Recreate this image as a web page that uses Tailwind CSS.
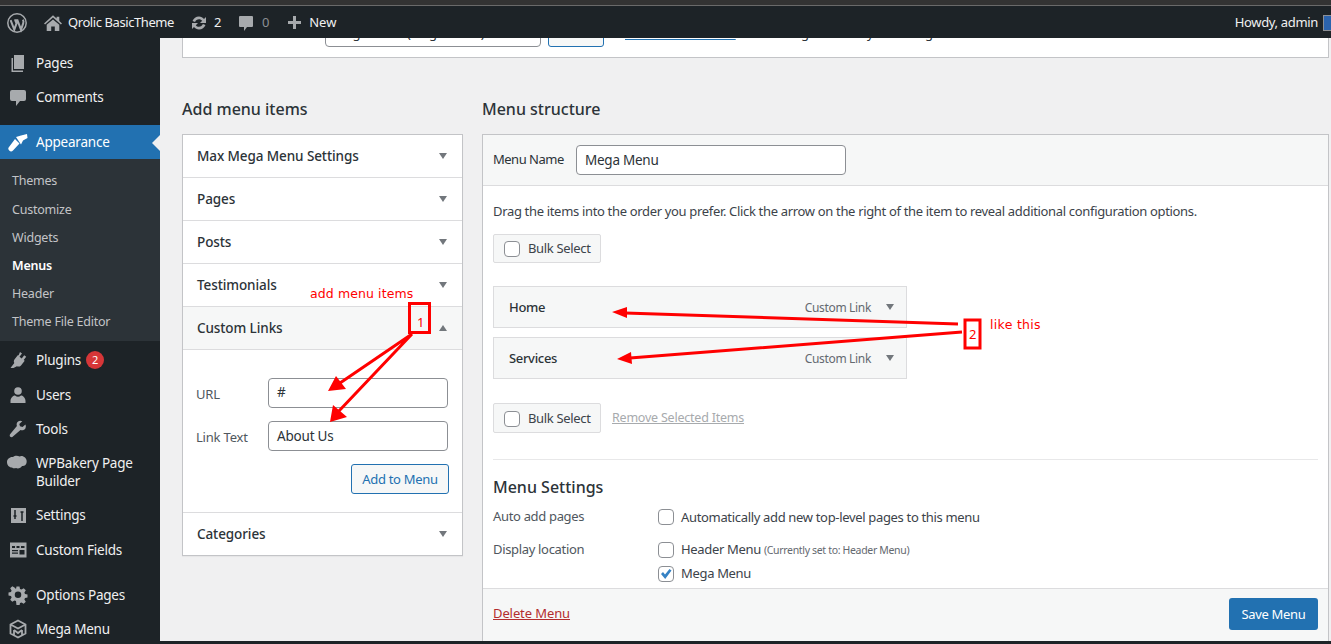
<!DOCTYPE html>
<html>
<head>
<meta charset="utf-8">
<script src="https://cdn.jsdelivr.net/npm/@tailwindcss/browser@4"></script>
</head>
<body class="bg-[#1d2327]">
<div class="relative w-[1331px] h-[644px] overflow-hidden flex flex-col font-['Noto_Sans',sans-serif] text-[13px] tracking-[-0.33px] text-[#2c3338]">
  <div class="h-[5px] bg-[#333333] shrink-0"></div>
  <div class="h-px bg-[#6a6a6a] shrink-0"></div>
  <!-- Admin bar -->
  <header class="relative z-10 h-[32px] shrink-0 bg-[#1d2327] flex items-center text-[#f0f0f1] text-[13px] pt-[1px]">
    <svg class="ml-[7px] w-[20px] h-[20px] fill-none stroke-[#a7aaad]" viewBox="0 0 20 20"><circle cx="10" cy="10" r="9.200" stroke-width="1.500"/><path d="M3.600 7.200l3.700 9.500 2.200-6.300-1.200-3.200M7.300 7.200h3.900M10.400 7.200l3.600 9.500 2.200-6.400c.6-1.700.1-3-.5-3.600" stroke-width="2"/></svg>
    <svg class="ml-[17px] w-[18px] h-[18px] fill-[#a7aaad]" viewBox="0 0 20 20"><path d="M10 1.500L0 10.500l1.200 1.300L10 4l8.800 7.800 1.200-1.300-3-2.700V3h-3v2.100z"/><path d="M3 12l7-6 7 6v7h-5v-5H8v5H3z"/></svg>
    <span class="ml-[6px] w-[107px] whitespace-nowrap tracking-[-0.42px]">Qrolic BasicTheme</span>
    <svg class="ml-[14px] w-[20px] h-[20px] fill-[#a7aaad]" viewBox="0 0 20 20"><path d="M10 3.500c2 0 3.800.9 5 2.400L17 4v6h-6l2.200-2.200C12.400 6.800 11.300 6.200 10 6.200c-1.800 0-3.300 1.100-3.900 2.700L3.500 8C4.500 5.400 7 3.500 10 3.500zM3 10h6l-2.200 2.200c.8 1 1.900 1.600 3.200 1.600 1.800 0 3.300-1.100 3.900-2.700l2.600.9c-1 2.600-3.500 4.500-6.500 4.500-2 0-3.800-.9-5-2.400L3 16z"/></svg>
    <span class="ml-[5px]">2</span>
    <svg class="ml-[17px] w-[16px] h-[18px] fill-[#a7aaad]" viewBox="0 0 16 18"><path d="M2 2h12a1 1 0 011 1v9a1 1 0 01-1 1H9l-3 4v-4H2a1 1 0 01-1-1V3a1 1 0 011-1z"/></svg>
    <span class="ml-[8px] text-[#8c8f94]">0</span>
    <svg class="ml-[18px] w-[15px] h-[15px] fill-[#a7aaad]" viewBox="0 0 15 15"><path d="M6 1h3v5h5v3H9v5H6V9H1V6h5z"/></svg>
    <span class="ml-[7px] tracking-[0px]">New</span>
    <span class="ml-auto mr-[5px] tracking-[-0.33px]">Howdy, admin</span>
    <span class="w-[8px] h-[16px] bg-[#2b63ad] border border-[#8c8f94] border-r-0"></span>
  </header>

  <div class="flex flex-1 min-h-0">
    <!-- Sidebar -->
    <aside class="w-[160px] shrink-0 bg-[#1d2327] text-[#f0f0f1] text-[13.5px] tracking-[-0.22px] flex flex-col overflow-hidden">
      <div class="h-[87px] pt-[8px] shrink-0">
        <div class="flex items-center h-[34px] pl-[8px] gap-[8px]">
          <svg class="w-[20px] h-[20px] fill-[#a7aaad]" viewBox="0 0 20 20"><path d="M6 2h10v14H6z"/><path d="M3.500 5H5v12.500h10V19H3.500z"/></svg><span>Pages</span>
        </div>
        <div class="flex items-center h-[34px] pl-[8px] gap-[8px]">
          <svg class="w-[20px] h-[20px] fill-[#a7aaad]" viewBox="0 0 20 20"><path d="M4 3h12a2 2 0 012 2v7a2 2 0 01-2 2h-4l-4 5v-5H4a2 2 0 01-2-2V5a2 2 0 012-2z"/></svg><span>Comments</span>
        </div>
      </div>
      <div class="relative flex items-center h-[34px] shrink-0 pl-[8px] gap-[8px] bg-[#2271b1] text-white">
        <svg class="w-[20px] h-[20px] fill-white" viewBox="0 0 20 20"><path d="M8 5l5-1.500L19 2l.5 4-4.500 2.500-2 4z"/><path d="M7 7l4.500 4.500L5 18.500a2.400 2.400 0 01-3.800-3.800z"/></svg>
        <span>Appearance</span>
        <span class="absolute right-0 top-[10px] w-0 h-0 border-y-[8px] border-y-transparent border-r-[8px] border-r-[#f0f0f1]"></span>
      </div>
      <div class="bg-[#2c3338] h-[182px] shrink-0 pt-[7px] text-[12.500px] text-[#c3c4c7]">
        <div class="h-[29px] pl-[12px] flex items-center pt-[2px]">Themes</div>
        <div class="h-[28px] pl-[12px] flex items-center pt-[2px]">Customize</div>
        <div class="h-[28px] pl-[12px] flex items-center pt-[2px]">Widgets</div>
        <div class="h-[28px] pl-[12px] flex items-center pt-[2px] font-semibold text-white">Menus</div>
        <div class="h-[28px] pl-[12px] flex items-center pt-[2px]">Header</div>
        <div class="h-[28px] pl-[12px] flex items-center pt-[2px]">Theme File Editor</div>
      </div>
      <div class="flex items-center h-[36px] mt-px shrink-0 pl-[8px] gap-[8px]">
        <svg class="w-[20px] h-[20px] fill-[#a7aaad]" viewBox="0 0 20 20"><path d="M12 2l2 1.500-2.500 3.300 2.200 1.700 2.500-3.300 2 1.500-2.500 3.300 1 .8-3.700 4.600c-1.100 1.300-2.800 1.500-4.100.8L5.500 18H2.500l3.800-5c-.7-1.200-.6-2.700.3-3.800L10 5l.5.400z"/></svg>
        <span>Plugins</span>
        <span class="-ml-[3px] w-[18px] h-[18px] rounded-full bg-[#d63638] text-white text-[11px] flex items-center justify-center">2</span>
      </div>
      <div class="flex items-center h-[34px] shrink-0 pl-[8px] gap-[8px]">
        <svg class="w-[20px] h-[20px] fill-[#a7aaad]" viewBox="0 0 20 20"><circle cx="10" cy="6" r="3.800"/><path d="M2.500 16c0-3.500 3-5.500 4.500-5.500 1 .8 2 1.200 3 1.200s2-.4 3-1.200c1.500 0 4.500 2 4.500 5.500v2h-15z"/></svg><span>Users</span>
      </div>
      <div class="flex items-center h-[34px] shrink-0 pl-[8px] gap-[8px]">
        <svg class="w-[20px] h-[20px] fill-[#a7aaad]" viewBox="0 0 20 20"><path d="M17.500 5.500l-3 2.500-2.500-.7-.7-2.300 3-2.800C12 1 9.500 2 8.800 4.200c-.3 1-.2 1.900.1 2.800l-6.400 7.700c-1 1.100-1 2.300-.2 3s2 .6 2.900-.4L12.500 11c2 .6 4 0 5-1.800.5-1.200.5-2.500 0-3.700z"/></svg><span>Tools</span>
      </div>
      <div class="flex h-[52px] shrink-0 pl-[8px] gap-[8px] pt-[8px] leading-[18px]">
        <svg class="w-[20px] h-[18px] -ml-[1px] mr-[1px] fill-[#a7aaad] shrink-0" viewBox="0 0 20 18"><path d="M0 8c0-3 3-5.500 6-5 2-2 5-1.500 6.500-.5 1.500-1 4-.5 5.500 1 1.500 1.500 2 3.500 1.500 5.500-.5 2-2.500 3.500-4.500 3-1 2-4 3-6 2-1 .5-3 .5-4-.5C2 13.500 0 11 0 8z"/></svg>
        <span class="w-[110px]">WPBakery Page Builder</span>
      </div>
      <div class="flex items-center h-[34px] shrink-0 pl-[8px] gap-[8px]">
        <svg class="w-[20px] h-[20px]" viewBox="0 0 20 20"><path fill="#a7aaad" d="M3 3h15v15H3z"/><path stroke="#1d2327" stroke-width="1.500" d="M7 5v9M14 7v9M5.500 11h3M12.500 7h3"/></svg><span>Settings</span>
      </div>
      <div class="flex items-center h-[34px] mt-px shrink-0 pl-[8px] gap-[8px]">
        <svg class="w-[20px] h-[20px] shrink-0" viewBox="0 0 20 20"><path fill="#a7aaad" d="M2 2.500h16.500v15H2z"/><path fill="#1d2327" d="M4 6h3v2H4zM8.500 6h3v2h-3zM13 6h3.500v2H13zM4 10h6v1.200H4zM4 12.500h6v1.200H4zM11.500 10h5v4.500h-5z"/></svg><span class="whitespace-nowrap">Custom Fields</span>
      </div>
      <div class="flex items-center h-[34px] mt-[11px] shrink-0 pl-[8px] gap-[8px]">
        <svg class="w-[20px] h-[20px] fill-[#a7aaad]" viewBox="0 0 20 20"><path d="M8.500 1.500h3l.5 2.500 1.500.6 2.200-1.400 2.100 2.100-1.400 2.200.6 1.500 2.500.5v3l-2.500.5-.6 1.500 1.400 2.200-2.100 2.100-2.200-1.400-1.500.6-.5 2.500h-3L8 16l-1.500-.6-2.200 1.400-2.100-2.100 1.400-2.200L3 11l-2.500-.5v-3L3 7l.6-1.500-1.400-2.200 2.100-2.100 2.200 1.400L8 4zM10 6.500a3 3 0 100 6.500 3 3 0 000-6.500z"/></svg><span class="whitespace-nowrap">Options Pages</span>
      </div>
      <div class="flex items-center h-[34px] shrink-0 pl-[8px] gap-[8px]">
        <svg class="w-[20px] h-[20px] fill-none stroke-[#a7aaad]" stroke-width="1.800" viewBox="0 0 20 20"><path d="M10 1.500l7.500 4v9l-7.500 4-7.500-4v-9zM2.500 5.500l7.500 4 7.500-4M6 11v5M14 11v5M6 11l4 3 4-3"/></svg><span class="whitespace-nowrap">Mega Menu</span>
      </div>
    </aside>

    <!-- Main -->
    <main class="relative flex-1 min-w-0 bg-[#f0f0f1] pl-[22px] pr-[2px] overflow-hidden">
      <!-- Top card, scrolled mostly under the bar -->
      <div class="h-[20px] bg-white border-b border-x border-[#c3c4c7] relative overflow-hidden">
        <div class="flex items-start pl-[142px] -mt-[21px]">
          <div class="w-[216px] h-[30px] border border-[#8c8f94] rounded-[4px] pl-[8px] leading-[31px] whitespace-nowrap">Mega Menu (Mega Menu)</div>
          <div class="ml-[7px] w-[56px] h-[30px] border border-[#2271b1] rounded-[3px] bg-[#f6f7f7]"></div>
          <div class="ml-[21px] leading-[32px] whitespace-nowrap"><span class="text-[#2271b1] underline">create a new menu</span>. Do not forget to save your changes!</div>
        </div>
      </div>

      <div class="flex mt-[37px] items-start">
        <!-- Left column -->
        <section class="w-[281px] shrink-0">
          <h2 class="text-[16px] tracking-normal font-medium leading-[28px] mb-[11px]">Add menu items</h2>
          <div class="bg-white border border-[#c3c4c7] shadow-[0_1px_1px_rgba(0,0,0,0.04)] text-[13.500px] font-medium tracking-[-0.1px]">
            <div class="h-[43px] border-b border-[#dcdcde] pl-[14px] pr-[15px] flex items-center justify-between"><span>Max Mega Menu Settings</span><span class="w-0 h-0 border-x-[4.500px] border-x-transparent border-t-[6px] border-t-[#72777c]"></span></div>
            <div class="h-[43px] border-b border-[#dcdcde] pl-[14px] pr-[15px] flex items-center justify-between"><span>Pages</span><span class="w-0 h-0 border-x-[4.500px] border-x-transparent border-t-[6px] border-t-[#72777c]"></span></div>
            <div class="h-[43px] border-b border-[#dcdcde] pl-[14px] pr-[15px] flex items-center justify-between"><span>Posts</span><span class="w-0 h-0 border-x-[4.500px] border-x-transparent border-t-[6px] border-t-[#72777c]"></span></div>
            <div class="h-[43px] border-b border-[#dcdcde] pl-[14px] pr-[15px] flex items-center justify-between"><span>Testimonials</span><span class="w-0 h-0 border-x-[4.500px] border-x-transparent border-t-[6px] border-t-[#72777c]"></span></div>
            <div class="h-[43px] border-b border-[#dcdcde] bg-[#f6f7f7] pl-[14px] pr-[15px] flex items-center justify-between"><span>Custom Links</span><span class="w-0 h-0 border-x-[4.500px] border-x-transparent border-b-[6px] border-b-[#72777c]"></span></div>
            <div class="h-[163px] border-b border-[#dcdcde] pl-[13px] pr-[14px] pt-[28px] text-[#50575e] text-[13px] font-normal tracking-[-0.2px]">
              <div class="flex items-center h-[30px]"><span class="w-[72px] pt-[4px]">URL</span><div class="flex-1 h-[30px] border border-[#8c8f94] rounded-[4px] px-[8px] leading-[26px] text-[13.500px] text-[#2c3338]">#</div></div>
              <div class="flex items-center h-[30px] mt-[13px]"><span class="w-[72px] pt-[4px]">Link Text</span><div class="flex-1 h-[30px] border border-[#8c8f94] rounded-[4px] px-[8px] leading-[28px] text-[13.500px] text-[#2c3338]">About Us</div></div>
              <div class="flex justify-end mt-[13px] -mr-px"><div class="h-[30px] w-[98px] border border-[#2271b1] rounded-[3px] bg-[#f6f7f7] text-[#2271b1] tracking-[-0.3px] text-center leading-[28px]">Add to Menu</div></div>
            </div>
            <div class="h-[42px] pl-[14px] pr-[15px] flex items-center justify-between"><span>Categories</span><span class="w-0 h-0 border-x-[4.500px] border-x-transparent border-t-[6px] border-t-[#72777c]"></span></div>
          </div>
        </section>

        <!-- Right column -->
        <section class="ml-[19px] flex-1 min-w-0">
          <h2 class="text-[16px] tracking-normal font-medium leading-[28px] mb-[11px]">Menu structure</h2>
          <div class="h-[507px] bg-white border border-[#c3c4c7] border-b-0 flex flex-col">
            <div class="h-[51px] shrink-0 bg-[#f6f7f7] border-b border-[#dcdcde] pl-[10px] flex items-center">
              <span class="w-[83px] text-[#2c3338] tracking-[-0.5px]">Menu Name</span>
              <div class="w-[270px] h-[30px] border border-[#8c8f94] rounded-[4px] bg-white pl-[8px] leading-[28px] text-[13.500px] tracking-[-0.25px]">Mega Menu</div>
            </div>
            <div class="flex-1 pl-[10px] pr-[10px] pt-[17px] relative">
              <p class="leading-[17px] whitespace-nowrap text-[#3c434a]">Drag the items into the order you prefer. Click the arrow on the right of the item to reveal additional configuration options.</p>
              <div class="mt-[14px] w-[108px] h-[29px] border border-[#dcdcde] rounded-[2px] bg-[#f6f7f7] flex items-center pl-[10px] gap-[8px] text-[#3c434a]"><span class="w-[16px] h-[16px] rounded-[4px] border border-[#8c8f94] bg-white"></span><span>Bulk Select</span></div>
              <div class="mt-[23px] w-[414px] h-[42px] border border-[#dcdcde] bg-[#f6f7f7] flex items-center pl-[15px] pr-[12px] pt-px font-medium text-[13px]"><span>Home</span><span class="ml-auto font-normal text-[12px] text-[#646970]">Custom Link</span><span class="ml-[15px] mb-[2px] w-0 h-0 border-x-[4.500px] border-x-transparent border-t-[6px] border-t-[#72777c]"></span></div>
              <div class="mt-[9px] w-[414px] h-[42px] border border-[#dcdcde] bg-[#f6f7f7] flex items-center pl-[15px] pr-[12px] pt-px font-medium text-[13px]"><span>Services</span><span class="ml-auto font-normal text-[12px] text-[#646970]">Custom Link</span><span class="ml-[15px] mb-[2px] w-0 h-0 border-x-[4.500px] border-x-transparent border-t-[6px] border-t-[#72777c]"></span></div>
              <div class="mt-[24px] flex items-center">
                <div class="w-[108px] h-[30px] pt-px border border-[#dcdcde] rounded-[2px] bg-[#f6f7f7] flex items-center pl-[10px] gap-[8px] text-[#3c434a]"><span class="w-[16px] h-[16px] rounded-[4px] border border-[#8c8f94] bg-white"></span><span>Bulk Select</span></div>
                <span class="ml-[11px] pt-px text-[12.500px] tracking-[-0.22px] text-[#a7aaad] underline">Remove Selected Items</span>
              </div>
              <div class="mt-[26px] h-px bg-[#e8e8e9]"></div>
              <h3 class="mt-[15px] text-[16px] font-medium tracking-normal leading-[24px]">Menu Settings</h3>
              <div class="flex mt-[7px] h-[22px] items-center text-[#50575e]"><span class="w-[165px]">Auto add pages</span><span class="w-[16px] h-[16px] rounded-[4px] border border-[#8c8f94] bg-white"></span><span class="ml-[7px] pt-px text-[#3c434a]">Automatically add new top-level pages to this menu</span></div>
              <div class="flex mt-[9px] h-[24px] pt-[2px] items-center text-[#50575e]"><span class="w-[165px]">Display location</span><span class="w-[16px] h-[16px] rounded-[4px] border border-[#8c8f94] bg-white"></span><span class="ml-[7px] text-[#3c434a]">Header Menu <span class="text-[10.500px] text-[#646970]">(Currently set to: Header Menu)</span></span></div>
              <div class="flex h-[24px] pt-[2px] items-center"><span class="w-[165px]"></span><span class="w-[16px] h-[16px] rounded-[4px] border border-[#8c8f94] bg-white flex items-center justify-center"><svg class="w-[14px] h-[14px] fill-[#3582c4]" viewBox="0 0 14 14"><path d="M2 7l2-2 2 2.500L10.500 2l2 1.500L6.200 12z"/></svg></span><span class="ml-[7px] text-[#3c434a]">Mega Menu</span></div>
            </div>
            <div class="h-[53px] shrink-0 bg-[#f6f7f7] border-t border-[#dcdcde] pl-[10px] pr-[10px] pb-[3px] flex items-center justify-between">
              <span class="text-[#b32d2e] underline tracking-[-0.1px]">Delete Menu</span>
              <div class="w-[89px] h-[32px] rounded-[3px] bg-[#2271b1] text-white text-center leading-[32px]">Save Menu</div>
            </div>
          </div>
        </section>
      </div>
    </main>
  </div>
  <div class="h-[3px] shrink-0 bg-[#1d2327]"></div>

  <!-- Red annotations over the screenshot -->
  <svg class="absolute inset-0 z-20 pointer-events-none" width="1331" height="644" viewBox="0 0 1331 644">
    <g fill="none" stroke="#ff0000" stroke-width="3">
      <rect x="409.500" y="303.500" width="20" height="29"/>
      <rect x="965" y="320" width="15" height="28"/>
      <path d="M412 334L340 383M412 334L338 412M958 324L625 313M962 332L630 358"/>
    </g>
    <g fill="#ff0000">
      <path d="M328 391L336 376L346 389zM330 422L333 405L347 417zM612 312L627 307L627 318zM617 359L631 352L632 364z"/>
    </g>
  </svg>
  <span class="absolute z-30 left-[310px] top-[285px] text-[12.500px] leading-[18px] text-[#ff0000] tracking-[0.1px] font-['DejaVu_Sans',sans-serif] whitespace-nowrap">add menu items</span>
  <span class="absolute z-30 left-[417px] top-[313px] text-[13px] leading-[18px] text-[#ff0000]">1</span>
  <span class="absolute z-30 left-[969px] top-[325px] text-[13px] leading-[18px] text-[#ff0000]">2</span>
  <span class="absolute z-30 left-[990px] top-[316px] text-[12.500px] leading-[18px] text-[#ff0000] tracking-[0.3px] font-['DejaVu_Sans',sans-serif] whitespace-nowrap">like this</span>
</div>
</body>
</html>
